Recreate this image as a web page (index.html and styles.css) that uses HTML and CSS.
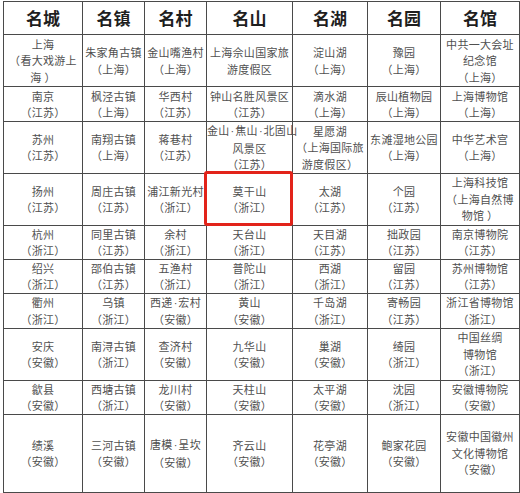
FILE: index.html
```html
<!DOCTYPE html>
<html lang="zh">
<head>
<meta charset="utf-8">
<title>名城名镇名村</title>
<link rel="stylesheet" href="styles.css">
</head>
<body>
<div class="page">
<table class="grid">
  <colgroup>
    <col class="c1"><col class="c2"><col class="c3"><col class="c4"><col class="c5"><col class="c6"><col class="c7">
  </colgroup>
  <thead>
    <tr class="head">
      <th>名城</th><th>名镇</th><th>名村</th><th>名山</th><th>名湖</th><th>名园</th><th>名馆</th>
    </tr>
  </thead>
  <tbody>
    <tr class="h51">
      <td>上海<br>（看大戏游上<br>海 ）</td>
      <td>朱家角古镇<br>（上海）</td>
      <td>金山嘴渔村<br>（上海）</td>
      <td>上海佘山国家旅<br>游度假区</td>
      <td>淀山湖<br>（上海）</td>
      <td>豫园<br>（上海）</td>
      <td>中共一大会址<br>纪念馆<br>（上海）</td>
    </tr>
    <tr class="h34">
      <td>南京<br>（江苏）</td>
      <td>枫泾古镇<br>（上海）</td>
      <td>华西村<br>（江苏）</td>
      <td>钟山名胜风景区<br>（江苏）</td>
      <td>滴水湖<br>（上海）</td>
      <td>辰山植物园<br>（上海）</td>
      <td>上海博物馆<br>（上海）</td>
    </tr>
    <tr class="h49">
      <td>苏州<br>（江苏）</td>
      <td>南翔古镇<br>（上海）</td>
      <td>蒋巷村<br>（江苏）</td>
      <td>金山<span class="dot">·</span>焦山<span class="dot">·</span>北固山<br>风景区<br>（江苏）</td>
      <td>星愿湖<br>（上海国际旅<br>游度假区）</td>
      <td>东滩湿地公园<br>（上海）</td>
      <td>中华艺术宫<br>（上海）</td>
    </tr>
    <tr class="h51">
      <td>扬州<br>（江苏）</td>
      <td>周庄古镇<br>（江苏）</td>
      <td>浦江新光村<br>（浙江）</td>
      <td class="marked">莫干山<br>（浙江）<span class="mark"></span></td>
      <td>太湖<br>（江苏）</td>
      <td>个园<br>（江苏）</td>
      <td>上海科技馆<br>（上海自然博<br>物馆 ）</td>
    </tr>
    <tr class="h32">
      <td>杭州<br>（浙江）</td>
      <td>同里古镇<br>（江苏）</td>
      <td>余村<br>（浙江）</td>
      <td>天台山<br>（浙江）</td>
      <td>天目湖<br>（江苏）</td>
      <td>拙政园<br>（江苏）</td>
      <td>南京博物院<br>（江苏）</td>
    </tr>
    <tr class="h33">
      <td>绍兴<br>（浙江）</td>
      <td>邵伯古镇<br>（江苏）</td>
      <td>五渔村<br>（浙江）</td>
      <td>普陀山<br>（浙江）</td>
      <td>西湖<br>（浙江）</td>
      <td>留园<br>（江苏）</td>
      <td>苏州博物馆<br>（江苏）</td>
    </tr>
    <tr class="h34">
      <td>衢州<br>（浙江）</td>
      <td>乌镇<br>（浙江）</td>
      <td>西递<span class="dot">·</span>宏村<br>（安徽）</td>
      <td>黄山<br>（安徽）</td>
      <td>千岛湖<br>（浙江）</td>
      <td>寄畅园<br>（江苏）</td>
      <td>浙江省博物馆<br>（浙江）</td>
    </tr>
    <tr class="h51">
      <td>安庆<br>（安徽）</td>
      <td>南浔古镇<br>（浙江）</td>
      <td>查济村<br>（安徽）</td>
      <td>九华山<br>（安徽）</td>
      <td>巢湖<br>（安徽）</td>
      <td>绮园<br>（浙江）</td>
      <td>中国丝绸<br>博物馆<br>（浙江）</td>
    </tr>
    <tr class="h33">
      <td>歙县<br>（安徽）</td>
      <td>西塘古镇<br>（浙江）</td>
      <td>龙川村<br>（安徽）</td>
      <td>天柱山<br>（安徽）</td>
      <td>太平湖<br>（安徽）</td>
      <td>沈园<br>（浙江）</td>
      <td>安徽博物院<br>（安徽）</td>
    </tr>
    <tr class="h77">
      <td>绩溪<br>（安徽）</td>
      <td>三河古镇<br>（安徽）</td>
      <td>唐模<span class="dot">·</span>呈坎<br>（安徽）</td>
      <td>齐云山<br>（安徽）</td>
      <td>花亭湖<br>（安徽）</td>
      <td>鲍家花园<br>（安徽）</td>
      <td>安徽中国徽州<br>文化博物馆<br>（安徽）</td>
    </tr>
  </tbody>
</table>
</div>
</body>
</html>
```
FILE: styles.css
```css
html, body {
  margin: 0;
  padding: 0;
  background: #ffffff;
}

.page {
  padding: 1px 0 0 3px;
}

.grid {
  border-collapse: collapse;
  table-layout: fixed;
  width: 516px;
  font-family: "Noto Sans CJK SC", "Noto Sans", "DejaVu Sans", sans-serif;
}

.c1 { width: 79px; }
.c2 { width: 62px; }
.c3 { width: 62px; }
.c4 { width: 86px; }
.c5 { width: 75px; }
.c6 { width: 73px; }
.c7 { width: 79px; }

.grid th,
.grid td {
  border: 1px solid #4a4a4a;
  text-align: center;
  vertical-align: middle;
  padding: 0;
  overflow: visible;
  white-space: nowrap;
}

.grid th {
  font-size: 17px;
  font-weight: 700;
  color: #1e1e1e;
  height: 32px;
  line-height: 20px;
}

.grid td {
  font-size: 11px;
  line-height: 16.5px;
  color: #505050;
  letter-spacing: 0.3px;
}

.dot {
  font-family: "Liberation Sans", sans-serif;
  letter-spacing: 0;
  padding: 0 1px;
}

.h32 td { height: 32px; }
.h33 td { height: 33px; }
.h34 td { height: 34px; }
.h49 td { height: 49px; }
.h51 td { height: 51px; }
.h77 td { height: 77px; }

.marked {
  position: relative;
}

.mark {
  position: absolute;
  left: -3px;
  top: -3px;
  right: -1px;
  bottom: -1px;
  border: 3px solid #e2231a;
  border-radius: 3px;
  pointer-events: none;
}
```
